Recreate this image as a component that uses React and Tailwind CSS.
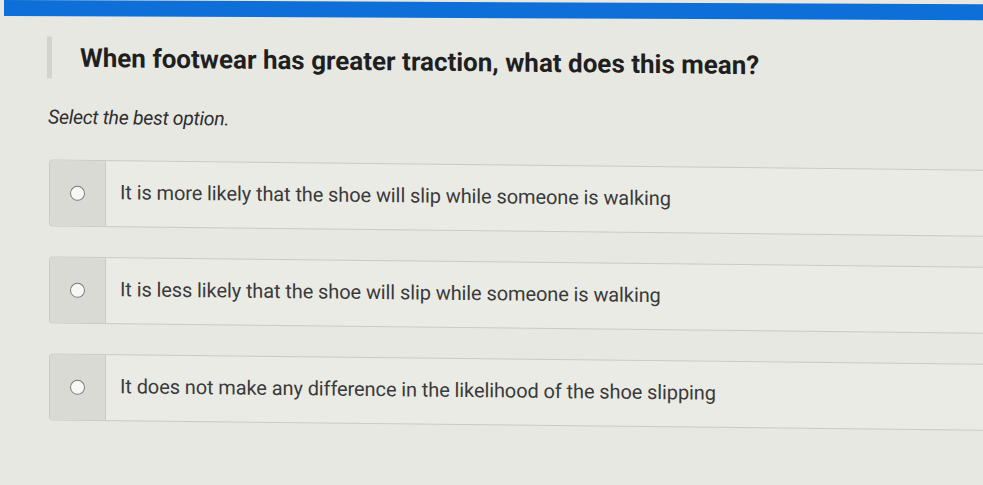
export default function App() {
  const options = [
    "It is more likely that the shoe will slip while someone is walking",
    "It is less likely that the shoe will slip while someone is walking",
    "It does not make any difference in the likelihood of the shoe slipping",
  ];
  return (
    <div
      className="w-[983px] h-[485px] overflow-hidden bg-[#e8e8e3]"
      style={{ fontFamily: "Roboto, 'Liberation Sans', sans-serif" }}
    >
      <div className="h-[16px] ml-[4px] bg-[#0d6fd7] origin-top-left skew-y-[0.25deg]" />
      <div className="origin-top-left skew-y-[0.62deg]">
        <div className="pl-[47px] pt-[20px]">
          <div className="h-[42px] border-l-[5px] border-[#d3d3ce] pl-[28px] flex items-center">
            <h1 className="text-[26px] leading-none font-bold text-[#1f1f1f]">
              When footwear has greater traction, what does this mean?
            </h1>
          </div>
          <p className="mt-[25px] ml-[1px] text-[19.5px] leading-[28px] italic text-[#2e2e2e] tracking-[-0.3px]">
            Select the best option.
          </p>
          <div className="mt-[28px] ml-[2px] flex flex-col gap-[30px]">
            {options.map((t) => (
              <div
                key={t}
                className="w-[960px] h-[67px] flex border border-[#cbcbc5] rounded-[4px] bg-[#ebebe6]"
              >
                <div className="w-[56px] shrink-0 rounded-l-[4px] bg-[#dadad4] border-r border-[#cbcbc5] flex items-center justify-center">
                  <span className="w-[15px] h-[15px] rounded-full border-[1.5px] border-[#7a7a7a] bg-[#f7f7f5]" />
                </div>
                <div className="flex items-center pl-[14px] pb-[4px] text-[20px] text-[#3a3a3a] tracking-[-0.1px]">
                  {t}
                </div>
              </div>
            ))}
          </div>
        </div>
      </div>
    </div>
  );
}
